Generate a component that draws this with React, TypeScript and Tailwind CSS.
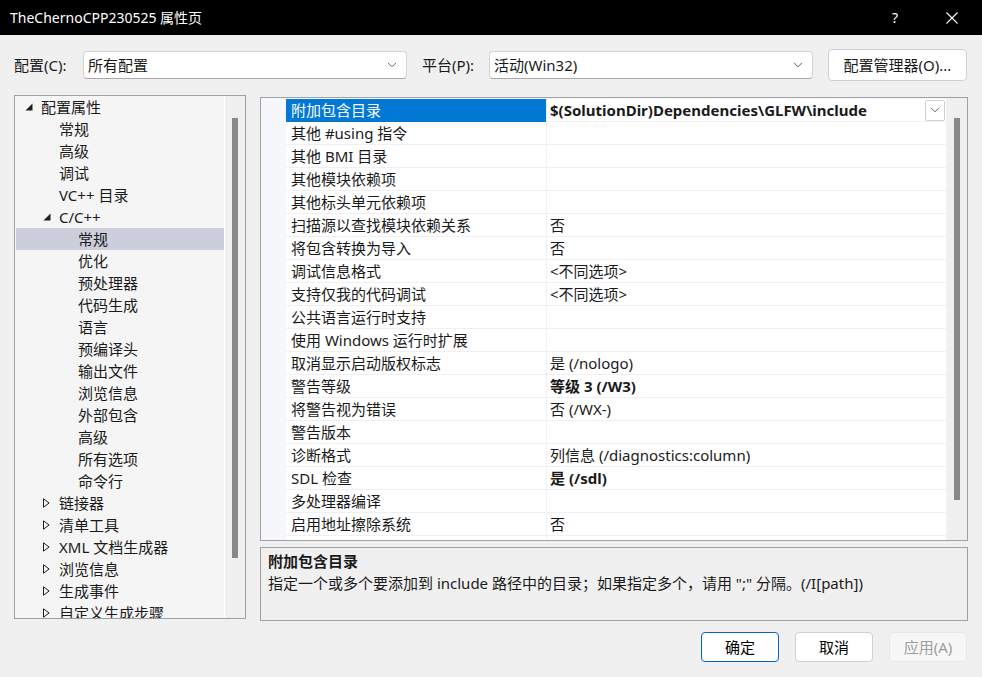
import * as React from "react";

type TreeItem = {
  label: string;
  level: 0 | 1 | 2;
  expander?: "open" | "closed";
  selected?: boolean;
};

const tree: TreeItem[] = [
  { label: "配置属性", level: 0, expander: "open" },
  { label: "常规", level: 1 },
  { label: "高级", level: 1 },
  { label: "调试", level: 1 },
  { label: "VC++ 目录", level: 1 },
  { label: "C/C++", level: 1, expander: "open" },
  { label: "常规", level: 2, selected: true },
  { label: "优化", level: 2 },
  { label: "预处理器", level: 2 },
  { label: "代码生成", level: 2 },
  { label: "语言", level: 2 },
  { label: "预编译头", level: 2 },
  { label: "输出文件", level: 2 },
  { label: "浏览信息", level: 2 },
  { label: "外部包含", level: 2 },
  { label: "高级", level: 2 },
  { label: "所有选项", level: 2 },
  { label: "命令行", level: 2 },
  { label: "链接器", level: 1, expander: "closed" },
  { label: "清单工具", level: 1, expander: "closed" },
  { label: "XML 文档生成器", level: 1, expander: "closed" },
  { label: "浏览信息", level: 1, expander: "closed" },
  { label: "生成事件", level: 1, expander: "closed" },
  { label: "自定义生成步骤", level: 1, expander: "closed" },
];

type Prop = { name: string; value?: string; bold?: boolean; active?: boolean };

const props: Prop[] = [
  { name: "附加包含目录", value: "$(SolutionDir)Dependencies\\GLFW\\include", bold: true, active: true },
  { name: "其他 #using 指令" },
  { name: "其他 BMI 目录" },
  { name: "其他模块依赖项" },
  { name: "其他标头单元依赖项" },
  { name: "扫描源以查找模块依赖关系", value: "否" },
  { name: "将包含转换为导入", value: "否" },
  { name: "调试信息格式", value: "<不同选项>" },
  { name: "支持仅我的代码调试", value: "<不同选项>" },
  { name: "公共语言运行时支持" },
  { name: "使用 Windows 运行时扩展" },
  { name: "取消显示启动版权标志", value: "是 (/nologo)" },
  { name: "警告等级", value: "等级 3 (/W3)", bold: true },
  { name: "将警告视为错误", value: "否 (/WX-)" },
  { name: "警告版本" },
  { name: "诊断格式", value: "列信息 (/diagnostics:column)" },
  { name: "SDL 检查", value: "是 (/sdl)", bold: true },
  { name: "多处理器编译" },
  { name: "启用地址擦除系统", value: "否" },
  { name: "启用模糊器支持(实验性)", value: "否" },
];

const Chevron = () => (
  <svg viewBox="0 0 10 6" className="h-[6px] w-[10px]" fill="none" stroke="#606060" strokeWidth="1" aria-hidden="true">
    <path d="M1 0.8l4 4 4-4" />
  </svg>
);

const OpenArrow = () => (
  <svg viewBox="0 0 8 8" className="h-[8px] w-[8px]" aria-hidden="true">
    <path d="M7.5 0.5v7h-7z" fill="#1e1e1e" />
  </svg>
);

const ClosedArrow = () => (
  <svg viewBox="0 0 7 10" className="h-[10px] w-[7px]" fill="none" stroke="#1e1e1e" strokeWidth="1" aria-hidden="true">
    <path d="M0.5 0.8v8.4l5.6-4.2z" />
  </svg>
);

function Select({ value }: { value: string }) {
  return (
    <div className="flex h-[28px] w-[324px] items-center justify-between rounded-[4px] border border-[#d4d4d4] border-b-[#a8a8a8] bg-white pl-[4px] pr-[9px]">
      <span>{value}</span>
      <Chevron />
    </div>
  );
}

function TreeRow({ item }: { item: TreeItem }) {
  const pad = item.level === 0 ? "pl-[9px]" : item.level === 1 ? "pl-[27px]" : "pl-[46px]";
  return (
    <div className={`flex h-[22px] shrink-0 items-center ${pad} ${item.selected ? "bg-[#cccedb]" : ""}`}>
      <span className="flex w-[16px] items-center">
        {item.expander === "open" && <OpenArrow />}
        {item.expander === "closed" && <ClosedArrow />}
      </span>
      <span className="whitespace-nowrap">{item.label}</span>
    </div>
  );
}

function PropRow({ p }: { p: Prop }) {
  return (
    <div className="flex h-[23px] shrink-0">
      <div
        className={`flex w-[260px] items-center border-b pl-[5px] whitespace-nowrap ${
          p.active ? "border-[#0078d4] bg-[#0078d4] text-white" : "border-[#f0f0f4] bg-white"
        }`}
      >
        {p.name}
      </div>
      <div className="flex flex-1 items-center justify-between border-b border-l border-[#f0f0f4] bg-white pl-[3px] whitespace-nowrap">
        <span className={p.bold ? "font-bold" : ""}>{p.value}</span>
        {p.active && (
          <span className="mr-[1px] flex h-[21px] w-[20px] items-center justify-center rounded-[2px] border border-[#d0d0d0] bg-white">
            <Chevron />
          </span>
        )}
      </div>
    </div>
  );
}

function Button({ label, primary, disabled }: { label: string; primary?: boolean; disabled?: boolean }) {
  const tone = primary
    ? "border-[#0067c0] bg-white text-black"
    : disabled
    ? "border-[#e8e8e8] bg-[#f7f7f7] text-[#9d9d9d]"
    : "border-[#d0d0d0] bg-white text-black";
  return (
    <div className={`flex h-[30px] w-[78px] items-center justify-center rounded-[4px] border ${tone}`}>{label}</div>
  );
}

export default function App() {
  return (
    <div className="flex h-[677px] w-[982px] flex-col overflow-hidden bg-[#f0f0f0] font-['Noto_Sans','Noto_Sans_CJK_SC',sans-serif] text-[15px] leading-[20px] text-[#1a1a1a]">
      {/* title bar */}
      <div className="flex h-[35px] shrink-0 items-center bg-black pl-[10px] text-white">
        <span className="flex-1 text-[14px]">TheChernoCPP230525 属性页</span>
        <span className="w-[20px] text-[14px]">?</span>
        <span className="ml-[34px] mr-[24px] flex h-[12px] w-[12px]">
          <svg viewBox="0 0 12 12" className="h-[12px] w-[12px]" fill="none" stroke="white" strokeWidth="1.1" aria-hidden="true">
            <path d="M0.5 0.5l11 11M11.5 0.5l-11 11" />
          </svg>
        </span>
      </div>

      {/* configuration row */}
      <div className="mb-[14px] mt-[14px] flex h-[32px] shrink-0 items-center px-[14px]">
        <span className="w-[69px]">配置(C):</span>
        <Select value="所有配置" />
        <span className="ml-[15px] w-[67px]">平台(P):</span>
        <Select value="活动(Win32)" />
        <div className="ml-[15px] flex h-[32px] w-[139px] items-center justify-center rounded-[4px] border border-[#d0d0d0] bg-white">
          配置管理器(O)...
        </div>
      </div>

      {/* main */}
      <div className="flex h-[526px] shrink-0 gap-[14px] px-[14px]">
        <div className="flex h-[524px] w-[232px] border border-[#a0a0a0] bg-[#f5f5f5]">
          <div className="flex flex-1 flex-col overflow-hidden pl-[1px]">
            {tree.map((t, i) => (
              <TreeRow key={i} item={t} />
            ))}
          </div>
          <div className="w-[21px] border-l border-white bg-[#f0f0f0] px-[7px] pt-[22px]">
            <div className="h-[440px] w-[6px] bg-[#888888]" />
          </div>
        </div>

        <div className="flex flex-1 flex-col gap-[6px] pt-[2px]">
          <div className="flex h-[444px] border border-[#a0a0a0] bg-[#f5f7fb]">
            <div className="w-[25px] shrink-0" />
            <div className="flex flex-1 flex-col overflow-hidden pt-[1px]">
              {props.map((p, i) => (
                <PropRow key={i} p={p} />
              ))}
            </div>
            <div className="w-[21px] shrink-0 bg-[#f0f0f0] pl-[8px] pt-[20px]">
              <div className="h-[382px] w-[6px] bg-[#888888]" />
            </div>
          </div>
          <div className="flex-1 border border-[#a0a0a0] bg-[#f0f0f0] pl-[7px] pt-[3px]">
            <div className="font-bold">附加包含目录</div>
            <div className="mt-[2px]">指定一个或多个要添加到 include 路径中的目录；如果指定多个，请用 ";" 分隔。(/I[path])</div>
          </div>
        </div>
      </div>

      {/* buttons */}
      <div className="mt-[11px] flex justify-end gap-[16px] pr-[15px]">
        <Button label="确定" primary />
        <Button label="取消" />
        <Button label="应用(A)" disabled />
      </div>
    </div>
  );
}
